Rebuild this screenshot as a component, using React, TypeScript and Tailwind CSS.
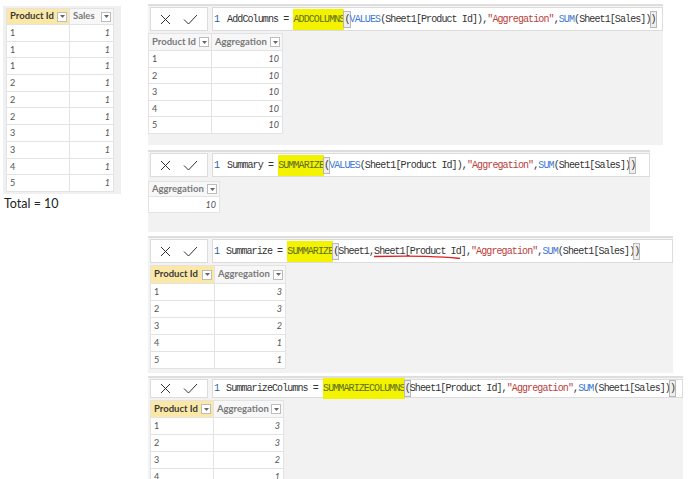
import React from "react";

type Col = { label: string; w: number; hl?: boolean; num?: boolean };

const mono = { fontFamily: '"Liberation Mono", "DejaVu Sans Mono", monospace' };

function DropBtn() {
  return (
    <span className="ml-auto flex h-[10px] w-[10px] shrink-0 items-center justify-center border border-[#bdbdbd] bg-white">
      <svg width="5" height="3" viewBox="0 0 5 3">
        <path d="M0 0h5L2.5 3z" fill="#666" />
      </svg>
    </span>
  );
}

function Grid({ cols, rows, rowH = 16.7, headH = 16 }: { cols: Col[]; rows: string[][]; rowH?: number; headH?: number }) {
  return (
    <div className="border-l border-t border-[#e3e3e3] bg-white" style={{ width: cols.reduce((a, c) => a + c.w, 0) + 1 }}>
      <div className="flex" style={{ height: headH }}>
        {cols.map((c, i) => (
          <div
            key={i}
            className={`flex items-center whitespace-nowrap border-b border-r border-[#e3e3e3] pl-[3px] pr-[2px] text-[9.5px] font-bold ${
              c.hl ? "bg-[#fbe8a6] text-[#3a3a3a]" : "bg-[#f7f7f7] text-[#7a7a7a]"
            }`}
            style={{ width: c.w }}
          >
            <span>{c.label}</span>
            <DropBtn />
          </div>
        ))}
      </div>
      {rows.map((r, ri) => (
        <div key={ri} className="flex" style={{ height: rowH }}>
          {r.map((v, ci) => (
            <div
              key={ci}
              className={`flex items-center border-b border-r border-[#e3e3e3] px-[3px] text-[9px] text-[#555] ${
                cols[ci].num ? "justify-end italic" : ""
              }`}
              style={{ width: cols[ci].w }}
            >
              {v}
            </div>
          ))}
        </div>
      ))}
    </div>
  );
}

function XCheck() {
  return (
    <div className="flex h-full w-[58px] items-center justify-center gap-[12px] border border-[#dcdcdc] bg-white">
      <svg width="11" height="11" viewBox="0 0 11 11">
        <path d="M1 1l9 9M10 1l-9 9" stroke="#333" strokeWidth="1" fill="none" />
      </svg>
      <svg width="15" height="11" viewBox="0 0 15 11">
        <path d="M1 5.5l4.5 4.5L14 1" stroke="#333" strokeWidth="1" fill="none" />
      </svg>
    </div>
  );
}

const B = ({ children }: { children: React.ReactNode }) => <span className="text-[#3c78d8]">{children}</span>;
const S = ({ children }: { children: React.ReactNode }) => <span className="text-[#b8413c]">{children}</span>;
const H = ({ children }: { children: React.ReactNode }) => (
  <span className="-my-[3px] bg-[#f3f300] py-[3px] text-[#5e7020]">{children}</span>
);
const P = ({ children }: { children: React.ReactNode }) => (
  <span className="outline outline-1 outline-[#b8b8b8] bg-[#eeeeee]">{children}</span>
);

function Formula({ children, lead = 8 }: { children: React.ReactNode; lead?: number }) {
  return (
    <div
      className="flex h-full flex-1 items-center whitespace-pre border border-[#dcdcdc] bg-white pl-[1px] text-[10px] tracking-[-0.9px] text-[#333]"
      style={mono}
    >
      <span className="text-[#2d5fa8]">1</span>
      <span style={{ width: lead }} />
      {children}
    </div>
  );
}

function Panel({ w, h, barH = 25, formula, children }: { w: number; h: number; barH?: number; formula: React.ReactNode; children: React.ReactNode }) {
  return (
    <div className="flex flex-col bg-[#f2f2f2]" style={{ width: w, height: h }}>
      <div className="h-[2px] bg-[#dedede]" />
      <div className="flex gap-[4px] bg-[#f4f4f4] pl-[2px] pt-[1px]" style={{ height: barH }}>
        <XCheck />
        {formula}
      </div>
      <div className="pt-[2px]">{children}</div>
    </div>
  );
}

export default function App() {
  const idCol = (w: number, hl = true): Col => ({ label: "Product Id", w, hl });
  const aggCol = (w: number): Col => ({ label: "Aggregation", w, num: true });

  return (
    <div className="flex h-[479px] w-[690px] items-start overflow-hidden bg-white" style={{ fontFamily: '"Lato", "Open Sans", sans-serif' }}>
      {/* source table */}
      <div className="w-[148px] shrink-0 pl-[3px] pt-[6px]">
        <div className="w-[118px] bg-[#f0f0f0] px-[3px] pb-[2px] pt-[2px]">
          <Grid
            cols={[
              { label: "Product Id", w: 63, hl: true },
              { label: "Sales", w: 44, num: true },
            ]}
            rows={["1", "1", "1", "2", "2", "2", "3", "3", "4", "5"].map((v) => [v, "1"])}
            rowH={16.7}
            headH={16}
          />
        </div>
        <div className="pl-[1px] pt-[1px] text-[12.5px] text-[#222]">Total = 10</div>
      </div>

      <div className="flex flex-col">
        <div className="h-[4px]" />
        <Panel
          w={515}
          h={141}
          formula={
            <Formula lead={8}>
              AddColumns = <H>ADDCOLUMNS</H>
              <P>(</P>
              <B>VALUES</B>(Sheet1[Product Id]),<S>"Aggregation"</S>,<B>SUM</B>(Sheet1[Sales])<P>)</P>
            </Formula>
          }
        >
          <Grid
            cols={[idCol(63, false), aggCol(71)]}
            rows={["1", "2", "3", "4", "5"].map((v) => [v, "10"])}
            rowH={16.5}
            headH={17}
          />
        </Panel>

        <div className="h-[5px]" />
        <Panel
          w={502}
          h={82}
          formula={
            <Formula lead={8}>
              Summary = <H>SUMMARIZE</H>
              <P>(</P>
              <B>VALUES</B>(Sheet1[Product Id]),<S>"Aggregation"</S>,<B>SUM</B>(Sheet1[Sales])<P>)</P>
            </Formula>
          }
        >
          <div className="pt-[2px]">
            <Grid cols={[aggCol(71)]} rows={[["10"]]} rowH={16} headH={15} />
          </div>
        </Panel>

        <div className="h-[4px]" />
        <Panel
          w={525}
          h={137}
          formula={
            <Formula lead={7}>
              Summarize = <H>SUMMARIZE</H>
              <P>(</P>
              Sheet1,
              <span className="relative">
                Sheet1[Product Id]
                <svg className="absolute left-0 top-[11px]" width="86" height="5" viewBox="0 0 86 5">
                  <path d="M0 1.5C20 1 50 0.8 70 2.2S84 3.6 86 3" stroke="#e02020" strokeWidth="1.3" fill="none" />
                </svg>
              </span>
              ,<S>"Aggregation"</S>,<B>SUM</B>(Sheet1[Sales])<P>)</P>
            </Formula>
          }
        >
          <div className="pl-[2px]">
            <Grid
              cols={[idCol(64), aggCol(71)]}
              rows={[
                ["1", "3"],
                ["2", "3"],
                ["3", "2"],
                ["4", "1"],
                ["5", "1"],
              ]}
              rowH={17}
              headH={18}
            />
          </div>
        </Panel>

        <div className="h-[3px]" />
        <Panel
          w={535}
          h={110}
          barH={24}
          formula={
            <Formula lead={7}>
              SummarizeColumns = <H>SUMMARIZECOLUMNS</H>
              <P>(</P>
              Sheet1[Product Id],<S>"Aggregation"</S>,<B>SUM</B>(Sheet1[Sales])<P>)</P>
            </Formula>
          }
        >
          <div className="pl-[2px]">
            <Grid
              cols={[idCol(63), aggCol(70)]}
              rows={[
                ["1", "3"],
                ["2", "3"],
                ["3", "2"],
                ["4", "1"],
              ]}
              rowH={17}
              headH={17}
            />
          </div>
        </Panel>
      </div>
    </div>
  );
}
